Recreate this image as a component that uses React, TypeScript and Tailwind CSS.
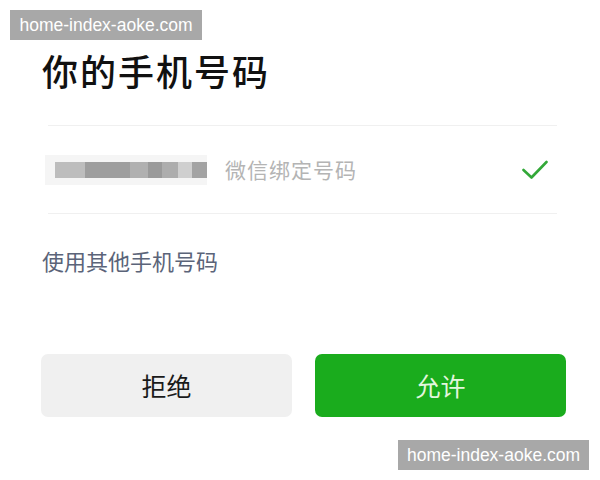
const cjk = { fontFamily: '"Noto Sans CJK SC", "Noto Sans", sans-serif' };

const mosaic = [
  { w: 30, c: "bg-[#bdbdbd]" },
  { w: 45, c: "bg-[#9e9e9e]" },
  { w: 18, c: "bg-[#b0b0b0]" },
  { w: 14, c: "bg-[#9a9a9a]" },
  { w: 16, c: "bg-[#adadad]" },
  { w: 14, c: "bg-[#cfcfcf]" },
  { w: 15, c: "bg-[#a3a3a3]" },
];

function Watermark({ className }: { className: string }) {
  return (
    <div
      className={`absolute flex h-[30px] items-center justify-center whitespace-nowrap bg-[#a8a8a8] text-[17.5px] text-white ${className}`}
      style={{ fontFamily: '"Liberation Sans", Arial, sans-serif' }}
    >
      home-index-aoke.com
    </div>
  );
}

export default function App() {
  return (
    <div className="relative h-[480px] w-[600px] overflow-hidden bg-white" style={cjk}>
      <Watermark className="left-[10px] top-[10px] w-[192px]" />
      <Watermark className="left-[398px] top-[440px] w-[191px]" />

      <div className="flex flex-col pl-[41px] pr-[34px] pt-[52px]">
        <h1 className="pl-[1px] text-[36px] font-medium leading-[36px] tracking-[2px] text-[#111]">
          你的手机号码
        </h1>

        <div className="ml-[7px] mr-[9px] mt-[37px] h-px bg-[#f0f0f0]" />
        <div className="flex h-[87px] items-center">
          <div className="ml-[4px] flex h-[30px] items-center bg-[#f5f5f5] pl-[10px]">
            {mosaic.map((m, i) => (
              <div key={i} className={`h-[16px] ${m.c}`} style={{ width: m.w }} />
            ))}
          </div>
          <span className="ml-[18px] text-[21px] tracking-[1px] text-[#b4b4b4]">微信绑定号码</span>
          <svg className="ml-auto mr-[18px]" width="26" height="20" viewBox="0 0 26 20" fill="none">
            <polyline
              points="1.5,10 9.5,17.5 24.5,2"
              stroke="#33a838"
              strokeWidth="2.6"
              strokeLinecap="round"
              strokeLinejoin="round"
            />
          </svg>
        </div>
        <div className="ml-[7px] mr-[9px] h-px bg-[#f0f0f0]" />

        <div className="mt-[34px] pl-[1px] text-[22px] leading-[24px] text-[#5b6479]">使用其他手机号码</div>

        <div className="mt-[82px] flex gap-[23px]">
          <button className="flex h-[63px] flex-1 items-center justify-center rounded-[7px] bg-[#f0f0f0] text-[25px] text-[#1a1a1a]">
            拒绝
          </button>
          <button className="flex h-[63px] flex-1 items-center justify-center rounded-[7px] bg-[#1aac1d] text-[25px] text-[#e3f6de]">
            允许
          </button>
        </div>
      </div>
    </div>
  );
}
